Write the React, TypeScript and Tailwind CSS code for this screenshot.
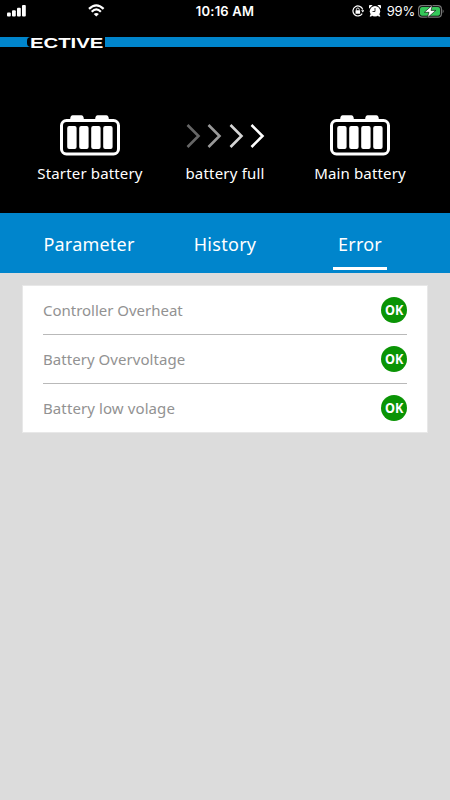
type ErrorItem = { name: string; spacing: string };

const errors: ErrorItem[] = [
    { name: 'Controller Overheat', spacing: '-tracking-[0.02px]' },
    { name: 'Battery Overvoltage', spacing: 'tracking-[0.05px]' },
    { name: 'Battery low volage', spacing: 'tracking-[0.1px]' },
];

function StatusBar() {
    return (
        <div className="grid h-[37px] grid-cols-3 bg-black text-white">
            <div className="flex items-start pl-[7px] pt-[4px]">
                <svg width="19" height="13" viewBox="0 0 19 13" fill="white">
                    <rect x="0" y="8.5" width="3.8" height="4" rx="1" />
                    <rect x="5" y="6.3" width="3.8" height="6.2" rx="1" />
                    <rect x="10" y="3.7" width="3.8" height="8.8" rx="1" />
                    <rect x="15" y="1" width="3.8" height="11.5" rx="1" />
                </svg>
                <svg className="ml-[62px]" width="17" height="13" viewBox="0 0 17 13" fill="none" stroke="white" strokeWidth="2.2">
                    <path d="M1 4.9 Q8.3 -2.2 15.6 4.9" />
                    <path d="M3.7 7.7 Q8.3 3.2 12.9 7.7" />
                    <path d="M8.3 12.6 L5.7 9.9 Q8.3 7.9 10.9 9.9 Z" fill="white" stroke="none" />
                </svg>
            </div>
            <p className="pt-[2px] text-center font-['Inter',sans-serif] text-[13px] font-semibold leading-[19px] tracking-[0.2px]">10:16 AM</p>
            <div className="flex items-start justify-end pr-[5px] pt-[5px]">
                <svg className="mr-[5px]" width="12" height="12" viewBox="0 0 12 12" fill="none" stroke="white">
                    <path d="M10.7 4.5 A5 5 0 1 0 10.2 8.6" strokeWidth="1.2" />
                    <path d="M9 5.3 H12.3 L10.8 7.6 Z" fill="white" stroke="none" />
                    <rect x="3.5" y="5.3" width="4.6" height="3.5" rx="0.5" fill="white" stroke="none" />
                    <path d="M4.4 5.5 V4.4 A1.4 1.4 0 0 1 7.2 4.4 V5.5" strokeWidth="0.9" />
                </svg>
                <svg className="mr-[6px]" width="12" height="12" viewBox="0 0 12 12" fill="white">
                    <path d="M0.3 3.6 A2 2 0 0 1 3.6 0.3 Z M11.7 3.6 A2 2 0 0 0 8.4 0.3 Z" />
                    <circle cx="6" cy="6.2" r="5.2" />
                    <path d="M1.8 9 L0.6 11.2 L2 11.8 L3.6 10 Z M10.2 9 L11.4 11.2 L10 11.8 L8.4 10 Z" />
                    <path d="M6 3 V6.5 H3.5" fill="none" stroke="black" strokeWidth="0.8" />
                </svg>
                <span className="-mt-[3px] mr-[3px] font-['Inter',sans-serif] text-[13px] leading-[19px] tracking-[-0.2px]">99%</span>
                <svg width="27" height="13" viewBox="0 0 27 13">
                    <rect x="0.6" y="0.6" width="22.8" height="11.6" rx="3.4" fill="none" stroke="#777" strokeWidth="1.2" />
                    <rect x="2" y="2" width="20" height="8.8" rx="2" fill="#34c759" />
                    <path d="M24.6 4.2 Q26.8 6.2 24.6 8.4 Z" fill="#777" />
                    <path d="M14.5 0 L6.4 7.3 H11 L9.2 13 L17.8 5.4 H13 Z" fill="white" stroke="black" strokeWidth="0.6" />
                </svg>
            </div>
        </div>
    );
}

function Battery({ label }: { label: string }) {
    return (
        <div className="flex flex-col items-center">
            <svg width="60" height="41" viewBox="0 0 60 41" fill="white">
                <path d="M10 5 L10.5 2 Q11 0.3 12.5 0.3 H21.5 Q23 0.3 23.5 2 L24 5 Z M35 5 L35.5 2 Q36 0.3 37.5 0.3 H46.5 Q48 0.3 48.5 2 L49 5 Z" />
                <rect x="1.5" y="5.5" width="57" height="33.5" rx="5" fill="none" stroke="white" strokeWidth="3" />
                <rect x="7.2" y="11" width="9.4" height="23" rx="2" />
                <rect x="19.2" y="11" width="9.4" height="23" rx="2" />
                <rect x="31.2" y="11" width="9.4" height="23" rx="2" />
                <rect x="43.2" y="11" width="9.4" height="23" rx="2" />
            </svg>
            <p className="mt-[7px] whitespace-nowrap text-[15px] leading-5 tracking-[0.15px]">{label}</p>
        </div>
    );
}

export default function App() {
    return (
        <div className="flex h-[800px] w-[450px] flex-col overflow-hidden bg-[#dcdcdc] font-['Noto_Sans',sans-serif]">
            <StatusBar />
            <div className="flex h-[10px] bg-[#0085cc]">
                <div className="ml-[27px] flex h-[10px] w-[78px] items-center rounded-l-[4px] bg-black pl-[3px]">
                    <span className="mt-px origin-left scale-x-[1.45] font-['Liberation_Sans',sans-serif] text-[14px] font-bold leading-[10px] text-white">ECTIVE</span>
                </div>
            </div>
            <div className="grid h-[166px] grid-cols-[180px_90px_180px] bg-black pt-[68px] text-white">
                <Battery label="Starter battery" />
                <div className="flex flex-col items-center">
                    <svg className="mt-[9px]" width="80" height="24" viewBox="0 0 80 24" fill="none" strokeWidth="2.6">
                        <path d="M2.5 1 L13.5 12 L2.5 23" stroke="#666" />
                        <path d="M23.5 1 L34.5 12 L23.5 23" stroke="#999" />
                        <path d="M45.5 1 L56.5 12 L45.5 23" stroke="#d5d5d5" />
                        <path d="M66.5 1 L77.5 12 L66.5 23" stroke="#fff" />
                    </svg>
                    <p className="mt-[15px] whitespace-nowrap text-[15px] leading-5 tracking-[0.2px]">battery full</p>
                </div>
                <Battery label="Main battery" />
            </div>
            <div className="grid h-[60px] grid-cols-[178px_94px_178px] bg-[#0085cc] text-[18px] text-white">
                <button className="pt-[3px] tracking-[0.2px]">Parameter</button>
                <button className="pt-[3px] tracking-[0.3px]">History</button>
                <button className="flex flex-col items-center pr-[2px] pt-[17px] leading-7 tracking-[0.2px]">
                    Error
                    <span className="mt-[9px] h-[3px] w-[54px] bg-white" />
                </button>
            </div>
            <div className="mx-[22px] mt-[12px] h-[148px] border border-[#e8e8e8] bg-white px-[20px] text-[15px] text-[#929292]">
                {errors.map((error) => (
                    <div key={error.name} className="flex h-[49px] items-center justify-between border-b-[1.5px] border-[#b9b9b9] last:h-[48px] last:border-b-0">
                        <p className={error.spacing}>{error.name}</p>
                        <span className="flex size-[26px] items-center justify-center rounded-full bg-[#0a9405] text-white">
                            <span className="scale-x-[0.9] text-[14px] font-bold leading-none">OK</span>
                        </span>
                    </div>
                ))}
            </div>
        </div>
    );
}
